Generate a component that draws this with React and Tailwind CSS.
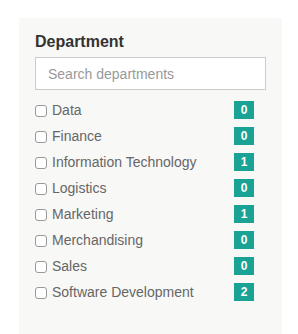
import React from "react";

const items = [
  ["Data", 0],
  ["Finance", 0],
  ["Information Technology", 1],
  ["Logistics", 0],
  ["Marketing", 1],
  ["Merchandising", 0],
  ["Sales", 0],
  ["Software Development", 2],
];

export default function App() {
  return (
    <div className="bg-white w-[298px] h-[334px] pt-[18px] pl-[19px] overflow-hidden" style={{ fontFamily: '"Liberation Sans", Arial, sans-serif' }}>
      <div className="w-[263px] h-[400px] bg-[#f8f8f7] px-4 pt-[14px]">
        <h3 className="text-[16px] leading-[20px] font-bold text-[#333]">Department</h3>
        <input
          type="text"
          placeholder="Search departments"
          className="mt-[5px] block w-full h-[33px] border border-[#ccc] bg-white px-[12px] text-[14px] text-[#555] placeholder:text-[#999] outline-none"
        />
        <ul className="mt-[7px]">
          {items.map(([name, n]) => (
            <li key={name} className="h-[26px] flex items-center pr-3">
              <span className="w-[12px] h-[12px] mt-[1px] border border-[#999] rounded-[3px] bg-white shrink-0" />
              <span className="ml-[5px] text-[14px] text-[#666] flex-1">{name}</span>
              <span className="w-[20px] h-[18px] bg-[#1aa394] text-white text-[12px] font-bold flex items-center justify-center">{n}</span>
            </li>
          ))}
        </ul>
      </div>
    </div>
  );
}
